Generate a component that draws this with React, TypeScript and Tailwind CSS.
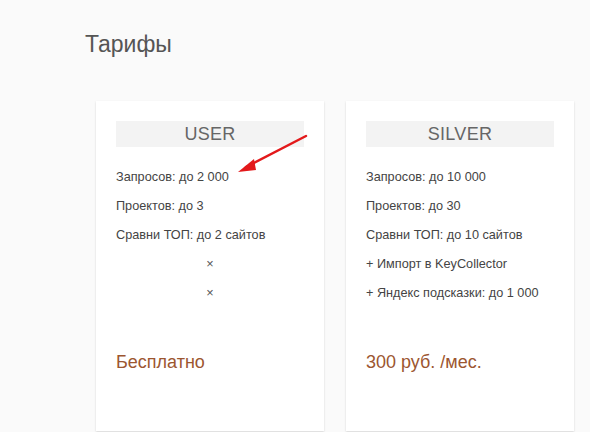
import React from 'react';

interface Plan {
  name: string;
  features: string[];
  price: string;
}

const plans: Plan[] = [
  {
    name: 'USER',
    features: ['Запросов: до 2 000', 'Проектов: до 3', 'Сравни ТОП: до 2 сайтов', '×', '×'],
    price: 'Бесплатно',
  },
  {
    name: 'SILVER',
    features: [
      'Запросов: до 10 000',
      'Проектов: до 30',
      'Сравни ТОП: до 10 сайтов',
      '+ Импорт в KeyCollector',
      '+ Яндекс подсказки: до 1 000',
    ],
    price: '300 руб. /мес.',
  },
];

const PlanCard: React.FC<{ plan: Plan; arrow?: boolean }> = ({ plan, arrow }) => (
  <div className="relative w-[228px] h-[330px] bg-white shadow-[0_1px_2px_rgba(0,0,0,0.15)] px-5 pt-5">
    <div className="h-[26px] bg-[#f3f3f3] flex items-center justify-center text-[18px] text-[#666] tracking-[0.3px]">
      {plan.name}
    </div>
    <ul className="mt-[16px]">
      {plan.features.map((f, i) => (
        <li
          key={i}
          className={`h-[29px] flex items-center text-[12.7px] text-[#444] ${f === '×' ? 'justify-center text-[10px] text-[#555]' : ''}`}
        >
          {f}
        </li>
      ))}
    </ul>
    <div className="mt-[41px] text-[18px] text-[#9c5630]">{plan.price}</div>
    {arrow && (
      <svg className="absolute left-[136px] top-[30px]" width="80" height="46" viewBox="0 0 80 46">
        <line x1="74" y1="5" x2="14" y2="36" stroke="#e3191b" strokeWidth="2.5" strokeLinecap="round" />
        <polygon points="6,41 22,28 24,39" fill="#e3191b" />
      </svg>
    )}
  </div>
);

export default function App() {
  return (
    <div className="w-[590px] h-[432px] overflow-hidden bg-[#fafafa] font-['Liberation_Sans',Arial,sans-serif]">
      <h1 className="pl-[85px] pt-[29px] text-[23px] leading-[30px] text-[#555]">Тарифы</h1>
      <div className="flex gap-[22px] pl-[96px] mt-[42px]">
        {plans.map((p, i) => (
          <PlanCard key={p.name} plan={p} arrow={i === 0} />
        ))}
      </div>
    </div>
  );
}
